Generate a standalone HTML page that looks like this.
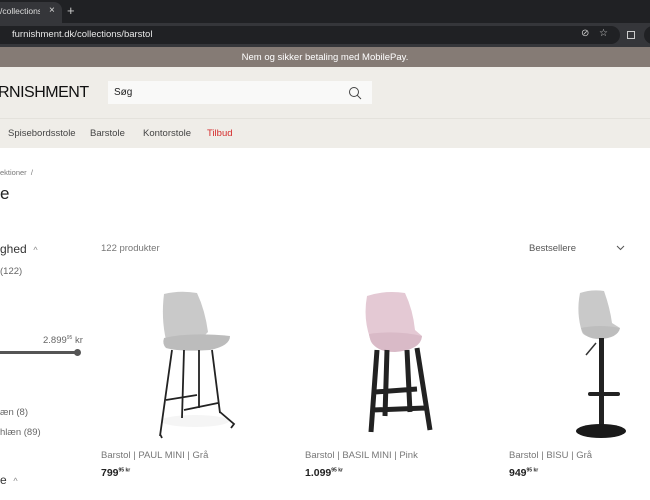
<!DOCTYPE html>
<html><head><meta charset="utf-8"><style>
*{margin:0;padding:0;box-sizing:border-box}
body{width:650px;height:500px;overflow:hidden;background:#fff;font-family:"Liberation Sans",sans-serif;position:relative;color:#333}
.a{position:absolute;white-space:nowrap}
</style></head><body>
<div class="a" style="left:0;top:0;width:650px;height:23px;background:#202124"></div>
<div class="a" style="left:0;top:2px;width:62px;height:21px;background:#35363a;border-radius:0 8px 0 0"></div>
<div class="a" style="left:0;top:6px;font-size:8.5px;color:#ddd;width:40px;overflow:hidden">/collections/b</div>
<div class="a" style="left:49px;top:5px;font-size:10px;color:#ddd">×</div>
<div class="a" style="left:67px;top:3px;font-size:13px;color:#ccc">+</div>
<div class="a" style="left:0;top:23px;width:650px;height:24px;background:#35363a"></div>
<div class="a" style="left:-10px;top:26px;width:630px;height:18px;background:#202124;border-radius:9px"></div>
<div class="a" style="left:12px;top:29px;font-size:9.5px;color:#e8e8e8">furnishment.dk/collections/barstol</div>
<div class="a" style="left:581px;top:28px;font-size:10px;color:#ccc">⊘</div>
<div class="a" style="left:599px;top:28px;font-size:10px;color:#ccc">☆</div>
<div class="a" style="left:627px;top:31px;width:8px;height:8px;border:1.5px solid #ccc"></div>
<div class="a" style="left:644px;top:26px;width:20px;height:18px;border-radius:9px;background:#202124"></div>
<div class="a" style="left:0;top:47px;width:650px;height:20px;background:#857b75"></div>
<div class="a" style="left:0;top:52px;width:650px;text-align:center;font-size:9.5px;color:#fff">Nem og sikker betaling med MobilePay.</div>
<div class="a" style="left:0;top:67px;width:650px;height:81px;background:#efede8"></div>
<div class="a" style="left:0;top:118px;width:650px;height:1px;background:#e4e2dc"></div>
<div class="a" style="left:-2px;top:84px;font-size:16px;color:#111;letter-spacing:-0.5px">RNISHMENT</div>
<div class="a" style="left:108px;top:81px;width:264px;height:23px;background:#f9f9f8"></div>
<div class="a" style="left:114px;top:87px;font-size:10px;color:#222">Søg</div>
<svg class="a" style="left:348px;top:86px" width="14" height="14" viewBox="0 0 14 14"><circle cx="6" cy="6" r="4.5" fill="none" stroke="#444" stroke-width="1"/><line x1="9.3" y1="9.3" x2="13" y2="13" stroke="#444" stroke-width="1"/></svg>
<div class="a" style="left:8px;top:128px;font-size:9.5px;color:#444">Spisebordsstole</div>
<div class="a" style="left:90px;top:128px;font-size:9.5px;color:#444">Barstole</div>
<div class="a" style="left:143px;top:128px;font-size:9.5px;color:#444">Kontorstole</div>
<div class="a" style="left:207px;top:128px;font-size:9.5px;color:#d52b2b">Tilbud</div>
<div class="a" style="left:0;top:168px;font-size:7.5px;color:#777">ektioner &nbsp;/</div>
<div class="a" style="left:0;top:184px;font-size:17px;color:#222">e</div>
<div class="a" style="left:0;top:242px;font-size:12px;color:#333">ghed &nbsp;<span style="font-size:9px;color:#888">^</span></div>
<div class="a" style="left:0;top:266px;font-size:9.5px;color:#666">(122)</div>
<div class="a" style="left:43px;top:335px;font-size:9.5px;color:#666">2.899<sup style="font-size:5px">95</sup> kr</div>
<div class="a" style="left:0;top:351px;width:77px;height:3px;background:#555"></div>
<div class="a" style="left:74px;top:349px;width:7px;height:7px;border-radius:50%;background:#555"></div>
<div class="a" style="left:0;top:407px;font-size:9.5px;color:#666">æn (8)</div>
<div class="a" style="left:0;top:427px;font-size:9.5px;color:#666">hlæn (89)</div>
<div class="a" style="left:0;top:473px;font-size:12px;color:#333">e &nbsp;<span style="font-size:9px;color:#888">^</span></div>
<div class="a" style="left:101px;top:243px;font-size:9.5px;color:#777">122 produkter</div>
<div class="a" style="left:529px;top:243px;font-size:9.5px;color:#555">Bestsellere</div>
<svg class="a" style="left:616px;top:245px" width="9" height="6"><polyline points="1,1 4.5,4.5 8,1" fill="none" stroke="#555"/></svg>
<!-- chair 1 -->
<svg class="a" style="left:150px;top:288px" width="90" height="152" viewBox="0 0 90 152">
<ellipse cx="45" cy="133" rx="34" ry="6" fill="#f5f5f5"/>
<path d="M14 6 Q30 2 47 5 Q55 22 58 44 L50 52 Q30 54 16 52 Q11 30 14 6Z" fill="#c9c9c9"/>
<path d="M14 50 Q40 44 80 48 Q80 58 60 62 Q30 64 16 60 Q12 56 14 50Z" fill="#bcbcbc"/>
<g stroke="#222" stroke-width="1.8" fill="none"><path d="M22 62 L10 148 M34 62 L32 130 M62 62 L70 125 M49 62 L49 120 M16 112 L47 107 M34 122 L68 115 M10 146 L12 150 M70 124 L84 136 L81 140"/></g>
</svg>
<!-- chair 2 -->
<svg class="a" style="left:355px;top:288px" width="90" height="152" viewBox="0 0 90 152">
<path d="M12 8 Q30 2 50 5 Q58 22 60 42 L67 48 Q66 60 40 62 Q16 62 15 50 Q8 30 12 8Z" fill="#e4c9d4"/>
<path d="M14 46 Q40 42 67 48 Q66 62 40 64 Q16 64 14 46Z" fill="#d9bac7"/>
<g stroke="#222" stroke-width="5" fill="none"><path d="M22 62 L16 144 M32 62 L30 128 M52 62 L55 124 M62 60 L75 142 M20 104 L62 101 M18 122 L70 120"/></g>
</svg>
<!-- chair 3 -->
<svg class="a" style="left:570px;top:288px" width="80" height="152" viewBox="0 0 80 152">
<path d="M10 5 Q22 1 34 3 Q40 20 42 35 L50 40 Q48 48 32 50 Q14 50 12 44 Q6 25 10 5Z" fill="#c9c9c9"/>
<path d="M11 40 Q30 36 50 40 Q48 50 30 51 Q14 51 11 40Z" fill="#bdbdbd"/>
<path d="M16 67 L26 55" stroke="#333" stroke-width="1.5"/>
<rect x="29" y="50" width="5" height="95" fill="#222"/>
<rect x="18" y="104" width="32" height="4" rx="2" fill="#222"/>
<ellipse cx="31" cy="143" rx="25" ry="7" fill="#1a1a1a"/>
</svg>
<div class="a" style="left:101px;top:450px;font-size:9.5px;color:#777">Barstol | PAUL MINI | Grå</div>
<div class="a" style="left:101px;top:467px;font-size:10.5px;color:#222;font-weight:bold">799<sup style="font-size:5px">95 kr</sup></div>
<div class="a" style="left:305px;top:450px;font-size:9.5px;color:#777">Barstol | BASIL MINI | Pink</div>
<div class="a" style="left:305px;top:467px;font-size:10.5px;color:#222;font-weight:bold">1.099<sup style="font-size:5px">95 kr</sup></div>
<div class="a" style="left:509px;top:450px;font-size:9.5px;color:#777">Barstol | BISU | Grå</div>
<div class="a" style="left:509px;top:467px;font-size:10.5px;color:#222;font-weight:bold">949<sup style="font-size:5px">95 kr</sup></div>
</body></html>
